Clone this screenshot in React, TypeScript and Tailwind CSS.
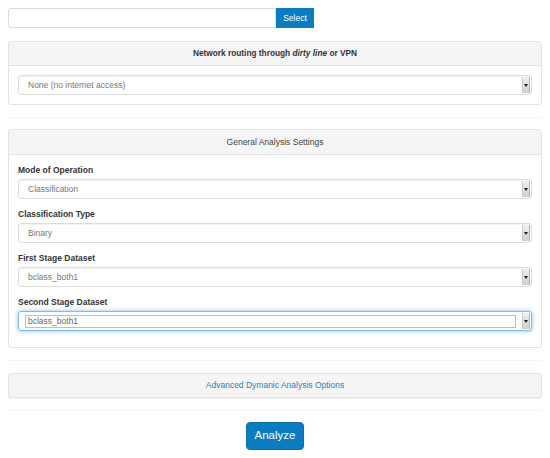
import React from 'react';

const Arrow = () => (
  <div className="w-[8px] self-stretch my-[1px] mr-[1px] bg-gradient-to-b from-[#f0f0f0] to-[#cfcfcf] border-l border-[#c8c8c8] border-r border-r-[#b5b5b5] flex items-center justify-center">
    <svg width="4" height="3" viewBox="0 0 4 3">
      <path d="M0 0h4L2 3z" fill="#222" />
    </svg>
  </div>
);

const SelectBox = ({ value, focused = false }: { value: string; focused?: boolean }) => (
  <div
    className={`h-[20px] flex items-stretch rounded-[3px] border bg-white ${
      focused
        ? 'border-[#7fbfe6] shadow-[0_0_4px_rgba(102,175,233,0.8)]'
        : 'border-[#dcdcdc] shadow-[inset_0_1px_1px_rgba(0,0,0,0.05)]'
    }`}
  >
    {focused ? (
      <div className="flex-1 flex items-center pl-[6px] pr-[6px]">
        <div className="flex-1 h-[13px] border border-[#bdbdbd] flex items-center pl-[2px] text-[8.5px] text-[#666]">
          {value}
        </div>
      </div>
    ) : (
      <div className="flex-1 flex items-center pl-[9px] text-[8.5px] text-[#777]">{value}</div>
    )}
    <Arrow />
  </div>
);

const Field = ({ label, value, focused }: { label: string; value: string; focused?: boolean }) => (
  <div className="flex flex-col">
    <div className="text-[8.5px] font-bold text-[#333] mb-[3px] leading-[12px]">{label}</div>
    <SelectBox value={value} focused={focused} />
  </div>
);

const Sep = () => <div className="h-px bg-[#f3f3f3]" />;

export default function App() {
  return (
    <div className="w-[550px] h-[458px] bg-white font-['Liberation_Sans',Arial,sans-serif] px-[8px] pt-[8px]">
      {/* file picker */}
      <div className="flex h-[20px]">
        <div className="w-[268px] border border-[#dcdcdc] rounded-l-[3px] bg-white" />
        <button className="w-[38px] bg-[#0c7cc1] text-white text-[8.5px] flex items-center justify-center">
          Select
        </button>
      </div>

      {/* routing */}
      <div className="mt-[13px] border border-[#e3e3e3] rounded-[3px] bg-white">
        <div className="h-[24px] bg-[#f5f5f5] border-b border-[#e3e3e3] flex items-center justify-center text-[8.3px] font-bold text-[#333]">
          Network routing through&nbsp;<i>dirty line</i>&nbsp;or VPN
        </div>
        <div className="px-[9px] pt-[9px] pb-[9px]">
          <SelectBox value="None (no internet access)" />
        </div>
      </div>

      <div className="mt-[12px]">
        <Sep />
      </div>

      {/* general */}
      <div className="mt-[11px] border border-[#e3e3e3] rounded-[3px] bg-white">
        <div className="h-[25px] bg-[#f5f5f5] border-b border-[#e3e3e3] flex items-center justify-center text-[8.5px] text-[#444]">
          General Analysis Settings
        </div>
        <div className="px-[9px] pt-[9px] pb-[16px] flex flex-col gap-[9px]">
          <Field label="Mode of Operation" value="Classification" />
          <Field label="Classification Type" value="Binary" />
          <Field label="First Stage Dataset" value="bclass_both1" />
          <Field label="Second Stage Dataset" value="bclass_both1" focused />
        </div>
      </div>

      <div className="mt-[12px]">
        <Sep />
      </div>

      {/* advanced */}
      <div className="mt-[12px] h-[25px] border border-[#e3e3e3] rounded-[3px] bg-[#f5f5f5] shadow-[0_1px_1px_rgba(0,0,0,0.06)] flex items-center justify-center text-[8.5px] text-[#2a7fc0]">
        Advanced Dymanic Analysis Options
      </div>

      <div className="mt-[12px]">
        <Sep />
      </div>

      <div className="flex justify-center mt-[11px]">
        <button className="w-[58px] h-[28px] rounded-[4px] bg-[#0c7cc1] border border-[#0b6fab] text-white text-[11.5px]">
          Analyze
        </button>
      </div>
    </div>
  );
}
